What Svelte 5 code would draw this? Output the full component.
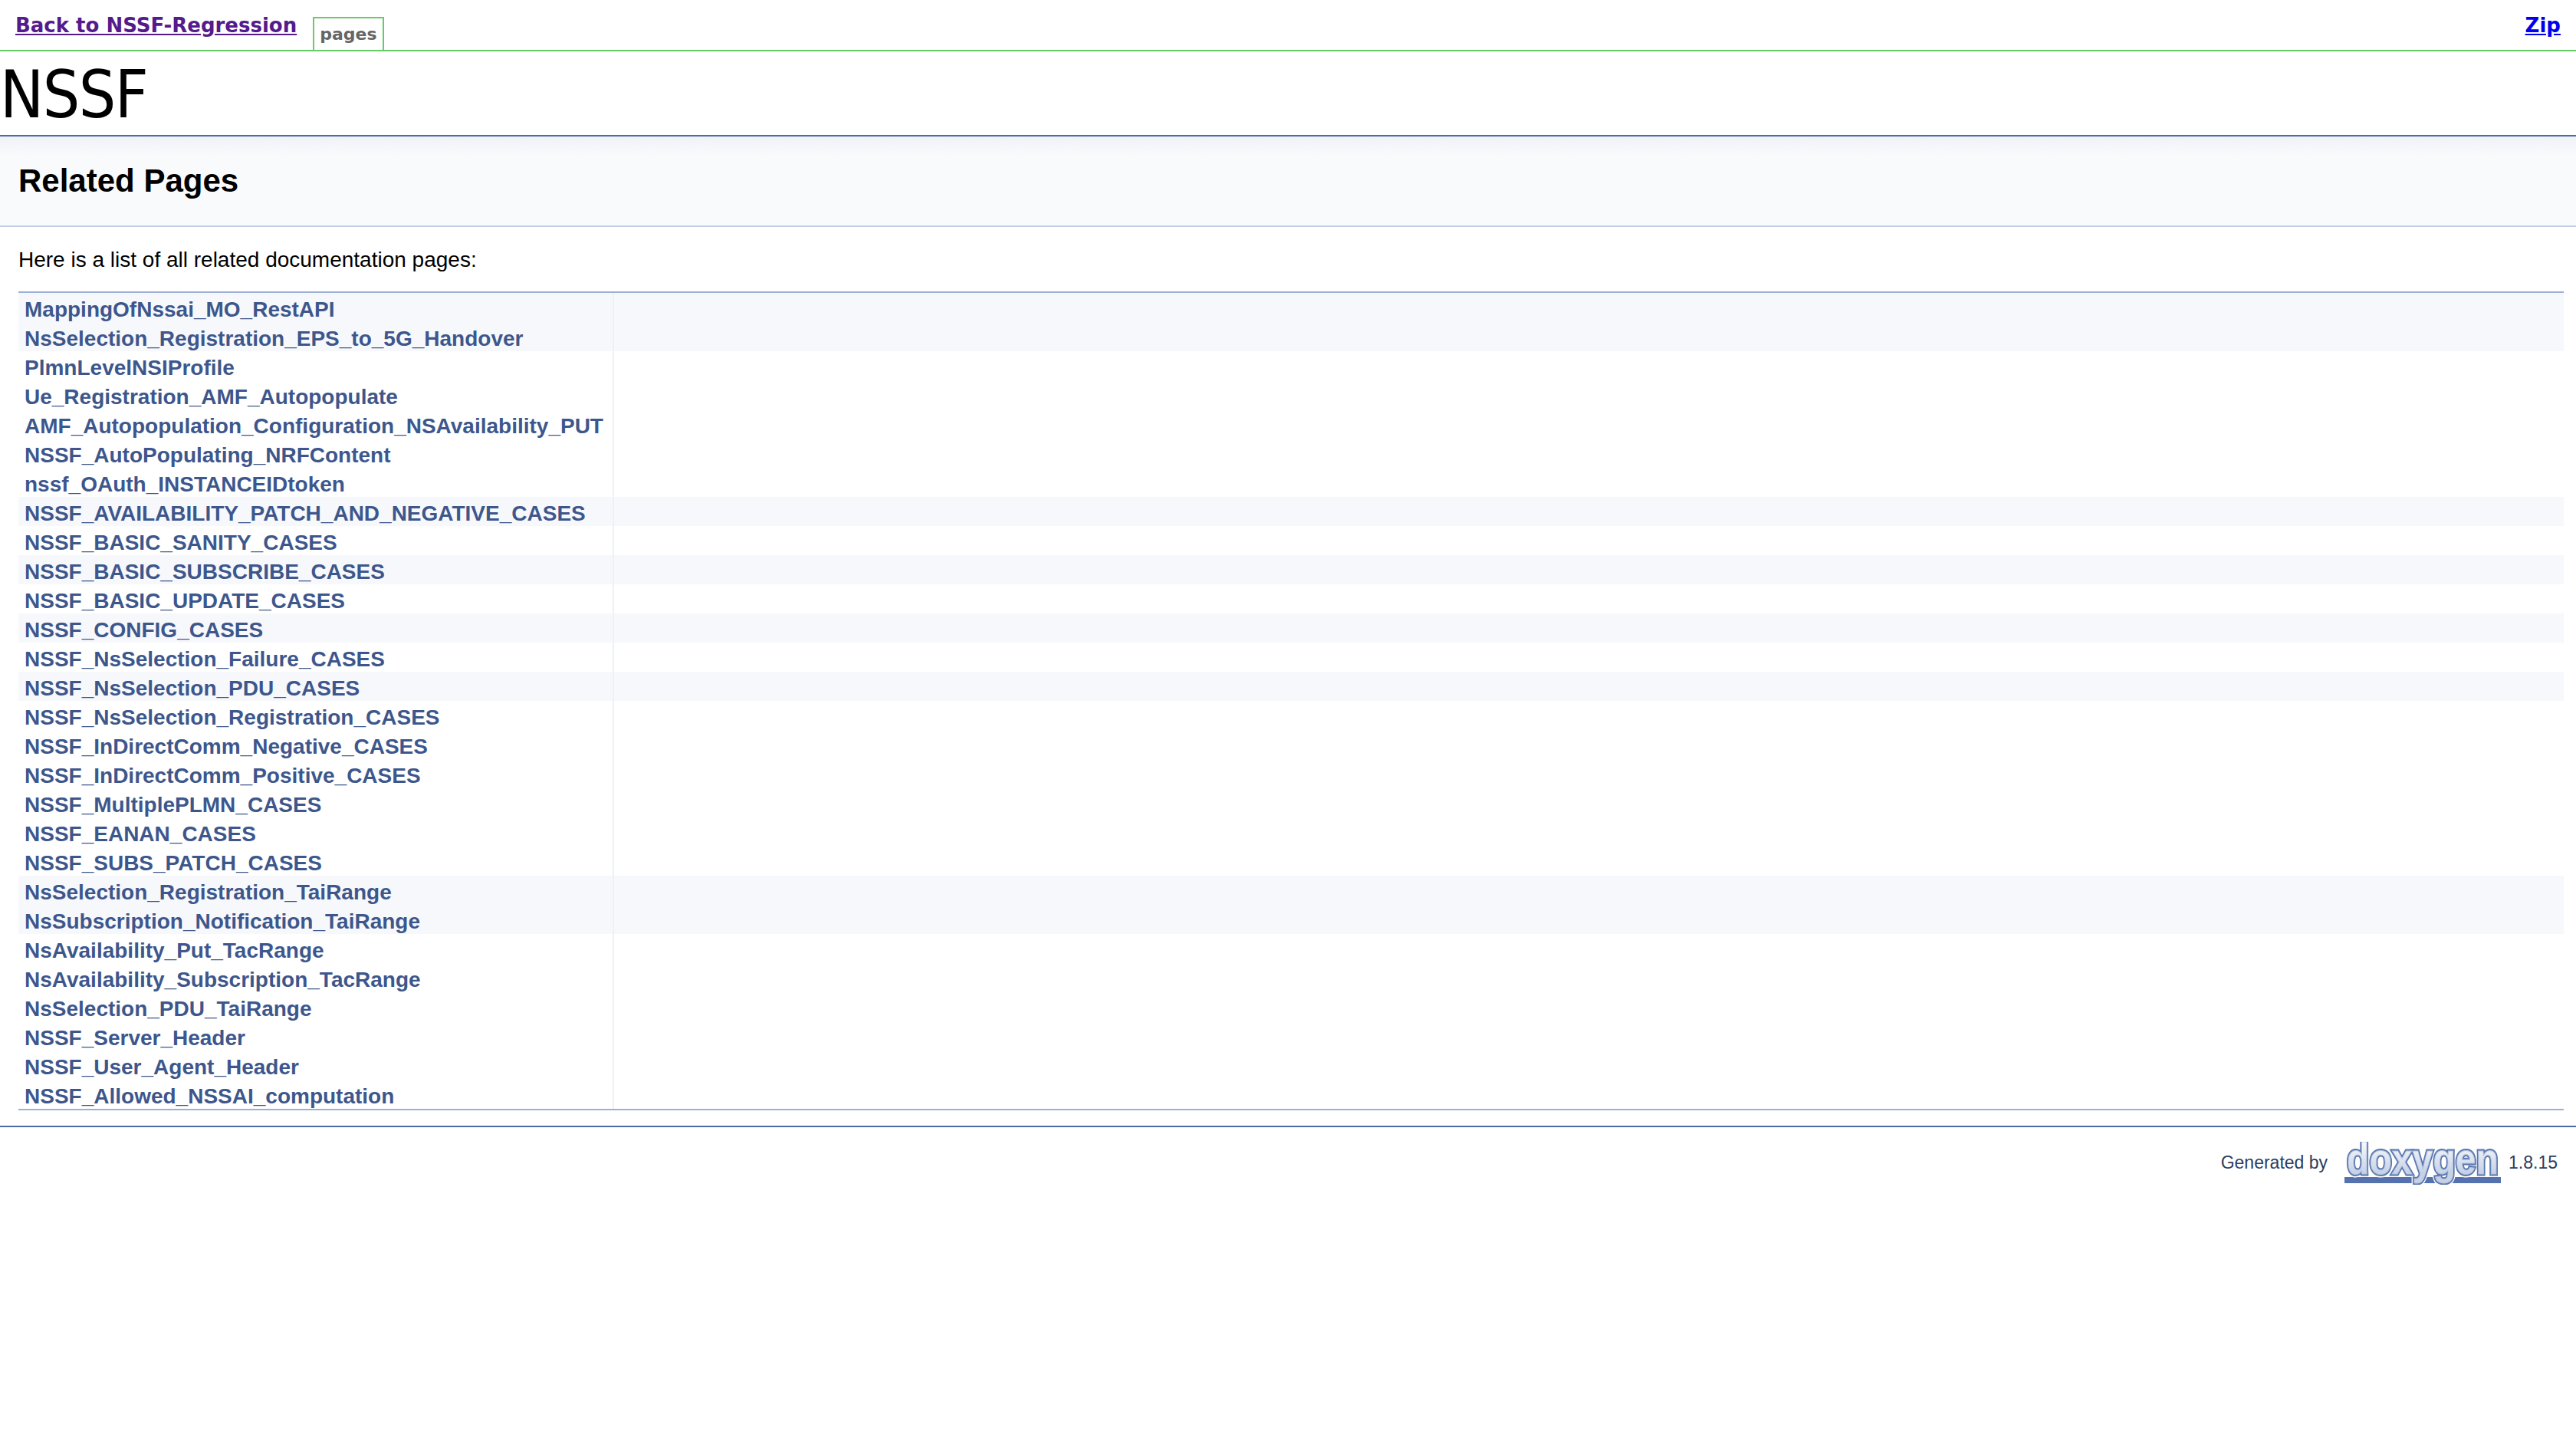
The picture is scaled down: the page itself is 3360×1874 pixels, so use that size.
<script lang="ts">
	const shadedRows = [0, 1, 7, 9, 11, 13, 20, 21];
	const titles = [
		'MappingOfNssai_MO_RestAPI',
		'NsSelection_Registration_EPS_to_5G_Handover',
		'PlmnLevelNSIProfile',
		'Ue_Registration_AMF_Autopopulate',
		'AMF_Autopopulation_Configuration_NSAvailability_PUT',
		'NSSF_AutoPopulating_NRFContent',
		'nssf_OAuth_INSTANCEIDtoken',
		'NSSF_AVAILABILITY_PATCH_AND_NEGATIVE_CASES',
		'NSSF_BASIC_SANITY_CASES',
		'NSSF_BASIC_SUBSCRIBE_CASES',
		'NSSF_BASIC_UPDATE_CASES',
		'NSSF_CONFIG_CASES',
		'NSSF_NsSelection_Failure_CASES',
		'NSSF_NsSelection_PDU_CASES',
		'NSSF_NsSelection_Registration_CASES',
		'NSSF_InDirectComm_Negative_CASES',
		'NSSF_InDirectComm_Positive_CASES',
		'NSSF_MultiplePLMN_CASES',
		'NSSF_EANAN_CASES',
		'NSSF_SUBS_PATCH_CASES',
		'NsSelection_Registration_TaiRange',
		'NsSubscription_Notification_TaiRange',
		'NsAvailability_Put_TacRange',
		'NsAvailability_Subscription_TacRange',
		'NsSelection_PDU_TaiRange',
		'NSSF_Server_Header',
		'NSSF_User_Agent_Header',
		'NSSF_Allowed_NSSAI_computation'
	];
</script>

<nav class="topbar">
	<a class="back" href="#back">Back to NSSF-Regression</a>
	<span class="tab">pages</span>
	<a class="zip" href="#zip">Zip</a>
</nav>

<h1 class="project">NSSF</h1>

<div class="header">
	<div class="title">Related Pages</div>
</div>

<div class="contents">
	<p class="intro">Here is a list of all related documentation pages:</p>
	<table class="directory">
		<tbody>
			{#each titles as title, index (title)}
				<tr class:shaded={shadedRows.includes(index)}>
					<td class="entry"><a href="#page">{title}</a></td>
					<td class="desc"></td>
				</tr>
			{/each}
		</tbody>
	</table>
</div>

<hr class="footer-line" />

<address class="footer">
	<span class="footer-text">Generated by</span>
	<svg class="logo" viewBox="0 0 208 56" width="208" height="56" role="img" aria-label="doxygen">
		<defs>
			<linearGradient id="logo-fill" x1="0" y1="0" x2="0" y2="1">
				<stop offset="0.2" stop-color="#f6f8fc" />
				<stop offset="0.8" stop-color="#c6d1e6" />
			</linearGradient>
			<filter id="logo-soft" x="-2%" y="-5%" width="104%" height="110%">
				<feGaussianBlur stdDeviation="0.6" />
			</filter>
			<text
				id="logo-word"
				x="104"
				y="42"
				text-anchor="middle"
				textLength="198"
				lengthAdjust="spacingAndGlyphs"
				font-family="Liberation Sans, sans-serif"
				font-weight="700"
				font-size="58">doxygen</text>
		</defs>
		<g filter="url(#logo-soft)">
			<rect x="2" y="46" width="204" height="8" fill="#5572ae" />
			<use href="#logo-word" fill="#fff" stroke="#fff" stroke-width="8" />
			<use href="#logo-word" fill="#5a78b0" stroke="#5a78b0" stroke-width="5" />
			<use href="#logo-word" fill="url(#logo-fill)" stroke="#b4c3de" stroke-width="1" />
		</g>
	</svg>
	<span class="footer-text">1.8.15</span>
</address>

<style>
	:global(body) {
		background: #fff;
		font-family: 'Liberation Sans', Arial, sans-serif;
		font-size: 28px;
		color: #000;
	}

	.topbar {
		display: flex;
		align-items: flex-start;
		height: 67px;
		box-sizing: border-box;
		padding: 0 20px;
		border-bottom: 2px solid #66cc66;
		font-family: 'DejaVu Sans', Verdana, sans-serif;
		font-weight: 700;
	}

	.back,
	.zip {
		margin-top: 17px;
		font-size: 26px;
		line-height: 32px;
	}

	.back {
		color: #551a8b;
	}

	.zip {
		margin-left: auto;
		color: #0000ee;
	}

	.tab {
		margin: 22px 0 0 21px;
		padding: 0 7px;
		height: 43px;
		box-sizing: border-box;
		border: 2px solid #66cc66;
		border-bottom: 0;
		font-size: 22px;
		line-height: 42px;
		color: #666;
	}

	.project {
		margin: 0;
		height: 111px;
		box-sizing: border-box;
		border-bottom: 2px solid #4a6aaa;
		font-family: 'DejaVu Sans Condensed', 'DejaVu Sans', sans-serif;
		font-size: 85px;
		font-weight: 400;
		line-height: 113px;
		letter-spacing: -1.5px;
		overflow: hidden;
	}

	.header {
		height: 118px;
		box-sizing: border-box;
		padding-left: 24px;
		background: linear-gradient(#f0f2f7, #f9fafc 24px);
		border-bottom: 2px solid #c4cfe5;
	}

	.title {
		font-size: 42px;
		font-weight: 700;
		line-height: 116px;
	}

	.contents {
		margin: 0 16px 0 24px;
	}

	.intro {
		margin: 0;
		padding-top: 24px;
		line-height: 38px;
		height: 84px;
		box-sizing: border-box;
	}

	.directory {
		width: 100%;
		border-collapse: separate;
		border-spacing: 0;
		border-top: 2px solid #9cafd4;
		border-bottom: 2px solid #9cafd4;
	}

	.directory tr.shaded {
		background: #f7f8fb;
	}

	.entry {
		width: 777px;
		height: 38px;
		box-sizing: border-box;
		padding: 6px 8px 0;
		border-right: 2px solid #eef1f7;
		line-height: 32px;
		font-weight: 700;
		white-space: nowrap;
	}

	.entry a {
		color: #3d578c;
		text-decoration: none;
	}

	.desc {
		padding: 0;
	}

	.footer-line {
		margin: 20px 0 0;
		height: 2px;
		border: 0;
		background: #4a6aaa;
	}

	.footer {
		display: flex;
		justify-content: flex-end;
		align-items: center;
		gap: 8px;
		padding: 19px 24px 0 0;
		font-style: normal;
		font-size: 23px;
		color: #2a3d61;
	}

	.footer-text {
		padding-bottom: 2px;
	}

	.logo {
		margin-left: 12px;
	}
</style>
